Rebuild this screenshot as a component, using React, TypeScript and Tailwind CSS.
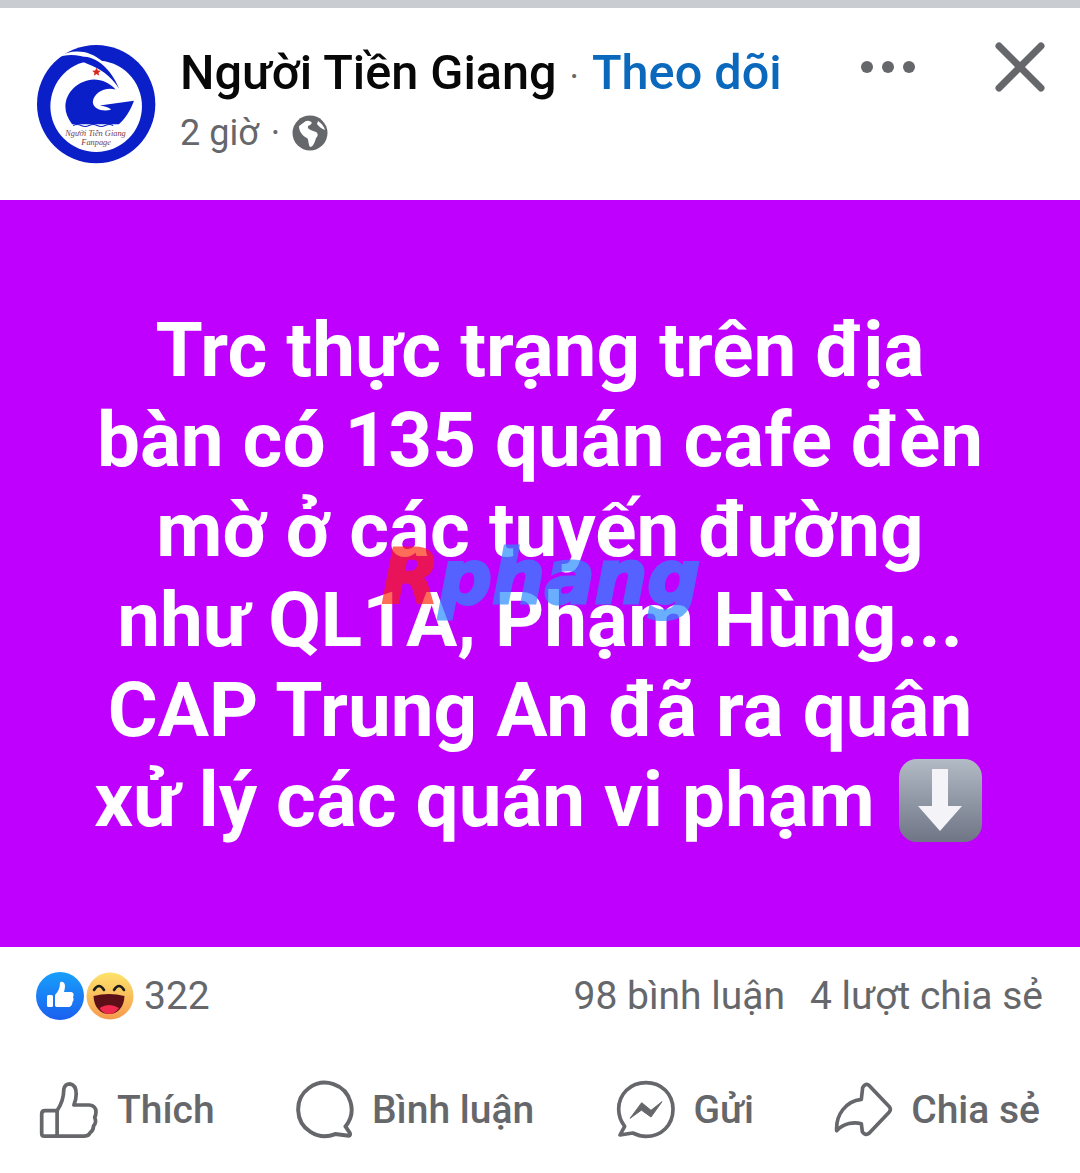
import React from "react";

const G = "#65676b";

function Logo() {
  return (
    <svg width="119" height="119" viewBox="110 135 356 356" className="shrink-0">
      <circle cx="287" cy="312" r="177" fill="#0a1fc8" />
      <circle cx="287" cy="318" r="137" fill="#fff" />
      <path d="M170 172 C240 130 325 165 358 268 C340 225 300 190 240 168 C215 162 190 165 170 172Z" fill="#fff" />
      <path d="M205 178 C265 150 325 190 356 266 C330 225 295 205 262 192 C240 182 222 178 205 178Z" fill="#0a1fc8" />
      <path d="M288 203 l4 8 9 1 -7 6 2 9 -8 -5 -8 5 2 -9 -7 -6 9 -1Z" fill="#d8281c" />
      <path d="M345 268 C310 260 280 280 277 305 C277 328 310 336 332 328 C322 320 310 318 298 316 L400 302 C388 335 372 358 355 372 L215 372 C202 355 195 338 195 320 C195 275 235 240 280 238 C305 238 330 250 345 268Z" fill="#0a1fc8" />
      <path d="M218 376 q12 -6 24 0 t24 0 t24 0 t24 0 t24 0" fill="none" stroke="#0a1fc8" strokeWidth="3" />
      <text x="285" y="408" textAnchor="middle" fontFamily="'Liberation Serif', serif" fontStyle="italic" fontSize="25" fill="#7d3a3a">Người Tiền Giang</text>
      <text x="287" y="434" textAnchor="middle" fontFamily="'Liberation Serif', serif" fontStyle="italic" fontSize="25" fill="#7d3a3a">Fanpage</text>
    </svg>
  );
}

function Globe() {
  return (
    <svg width="36" height="36" viewBox="0 0 36 36" className="shrink-0">
      <circle cx="18" cy="18" r="17.5" fill={G} />
      <path d="M7 11 C11 9 13 5 17 6 C22 7 19 10 16 11 C15 14 19 15 21 16 C26 17 27 20 24 23 C23 27 21 32 18 32 C16 29 17 25 15 23 C11 21 7 17 7 11Z" fill="#fff" />
      <path d="M26 6 C29 8 32 11 33 15 C30 14 27 12 25 9Z" fill="#fff" />
    </svg>
  );
}

function LikeBadge() {
  return (
    <svg width="48" height="48" viewBox="0 0 48 48" className="shrink-0">
      <defs>
        <linearGradient id="lk" x1="0" y1="0" x2="0" y2="1">
          <stop offset="0" stopColor="#18a0fb" />
          <stop offset="1" stopColor="#1b5ff0" />
        </linearGradient>
      </defs>
      <circle cx="24" cy="24" r="24" fill="url(#lk)" />
      <rect x="11" y="23" width="6" height="12" rx="1.5" fill="#fff" />
      <path d="M19 34 V23 C22 20 24 16 24 11 C24 9 29 9 29 14 C29 16 28.500 18 28 20 H35 C38 20 38 24 37 25 C38 27 37.500 29 36.500 30 C36.500 32 35.500 33 35 34 C34 35 33 35 31 35 H22 C21 35 20 35 19 34Z" fill="#fff" />
    </svg>
  );
}

function HahaBadge() {
  return (
    <svg width="48" height="48" viewBox="0 0 48 48" className="shrink-0">
      <defs>
        <linearGradient id="hh" x1="0" y1="0" x2="0" y2="1">
          <stop offset="0" stopColor="#fde36a" />
          <stop offset="1" stopColor="#f59a4d" />
        </linearGradient>
      </defs>
      <circle cx="24" cy="24" r="23.500" fill="url(#hh)" />
      <path d="M8 18 q5 -8 10 0 M28 18 q5 -8 10 0" fill="none" stroke="#1d1d1d" strokeWidth="2.600" strokeLinecap="round" />
      <path d="M7.500 24 Q23 20 38.500 24 C38 36 31 42 23 42 C15 42 8 36 7.500 24Z" fill="#5c0f17" />
      <path d="M13.500 36 Q23 30 33 36 C30 40 27 42 23 42 C19 42 16 40 13.500 36Z" fill="#f0294e" />
    </svg>
  );
}

function ThumbIcon() {
  return (
    <svg width="62" height="60" viewBox="115 385 185 178" className="shrink-0" fill="none" stroke={G} strokeWidth="11" strokeLinejoin="round" strokeLinecap="round">
      <path d="M126 486 Q126 476 136 476 L172 476 L172 552 L134 552 Q126 552 126 544Z" />
      <path d="M172 476 C188 452 192 432 192 412 Q195 396 210 396 Q229 399 229 426 C229 440 226 450 222 459 L268 459 Q288 461 288 480 Q288 490 284 496 Q291 510 281 521 Q280 535 271 541 Q267 552 254 552 L172 552" />
    </svg>
  );
}

function CommentIcon() {
  return (
    <svg width="60" height="60" viewBox="880 385 182 182" className="shrink-0" fill="none" stroke={G} strokeWidth="12" strokeLinejoin="round" strokeLinecap="round">
      <path d="M1036 526 A81 81 0 1 0 1005 549 L1046 554 Q1052 553 1049 545Z" />
    </svg>
  );
}

function MessengerIcon() {
  return (
    <svg width="60" height="60" viewBox="45 57 180 180" className="shrink-0" fill="none" stroke={G} strokeWidth="11" strokeLinejoin="round" strokeLinecap="round">
      <path d="M135 65 C88 65 53 99 53 145 C53 166 61 183 71 196 L57 222 L95 216 C108 222 120 226 135 226 C182 226 216 192 216 145 C216 99 182 65 135 65Z" />
      <path d="M88 171 L122 125 L150 148 L183 122 L150 168 L122 148Z" fill={G} stroke={G} strokeWidth="3" />
    </svg>
  );
}

function ShareIcon() {
  return (
    <svg width="60" height="60" viewBox="697 57 180 180" className="shrink-0" fill="none" stroke={G} strokeWidth="11" strokeLinejoin="round" strokeLinecap="round">
      <path d="M786 80 Q795 64 806 74 L866 137 Q872 145 866 153 L806 216 Q794 226 785 212 L782 188 C760 182 730 186 708 209 C705 162 735 120 782 115Z" />
    </svg>
  );
}

function DownArrow() {
  return (
    <span className="inline-flex w-[83px] h-[83px] rounded-[18px] bg-gradient-to-b from-[#b3bbc6] to-[#6f7585] items-center justify-center align-middle ml-[24px] mr-[4px] mt-[-10px]">
      <svg width="46" height="64" viewBox="0 0 46 64">
        <path d="M15 1 H31 V38 H45 L23 63 L1 38 H15Z" fill="#f3f3f8" />
      </svg>
    </span>
  );
}

export default function App() {
  return (
    <div className="w-[1080px] h-[1173px] bg-white flex flex-col overflow-hidden font-['Roboto',sans-serif]">
      <div className="h-[8px] bg-[#c9ccd1]" />

      <header className="h-[192px] flex items-start pl-[37px] pr-[34px] pt-[37px]">
        <Logo />
        <div className="ml-[24px] flex flex-col">
          <div className="flex items-baseline h-[58px] mt-[-1px]">
            <span className="text-[48.6px] leading-[58px] font-medium text-[#080809]">Người Tiền Giang</span>
            <span className="text-[36px] text-[#65676b] mx-[13px]">·</span>
            <span className="text-[48.6px] leading-[58px] font-medium text-[#0a68bd]">Theo dõi</span>
          </div>
          <div className="flex items-center mt-[9px] text-[36px] leading-[44px] text-[#65676b]">
            <span>2 giờ</span>
            <span className="ml-[12px] mr-[12px]">·</span>
            <Globe />
          </div>
        </div>
        <div className="ml-auto flex items-start">
          <div className="flex gap-[9px] mt-[16px]">
            <span className="w-[12px] h-[12px] rounded-full bg-[#65676b]" />
            <span className="w-[12px] h-[12px] rounded-full bg-[#65676b]" />
            <span className="w-[12px] h-[12px] rounded-full bg-[#65676b]" />
          </div>
          <svg width="52" height="52" viewBox="0 0 52 52" className="ml-[79px] mt-[-4px]" fill="none" stroke={G} strokeWidth="7" strokeLinecap="round">
            <path d="M5 5 L47 47 M47 5 L5 47" />
          </svg>
        </div>
      </header>

      <main className="relative h-[747px] bg-[#bf00ff] flex items-center justify-center">
        <p className="text-center text-white font-bold text-[76.4px] leading-[90px] whitespace-nowrap pt-[2px]">
          Trc thực trạng trên địa
          <br />
          bàn có 135 quán cafe đèn
          <br />
          mờ ở các tuyến đường
          <br />
          như QL1A, Phạm Hùng...
          <br />
          CAP Trung An đã ra quân
          <br />
          xử lý các quán vi phạm
          <DownArrow />
        </p>
        <span className="absolute left-[382px] top-[332px] text-[74px] leading-[90px] font-bold italic whitespace-nowrap font-['DejaVu_Sans',sans-serif]">
          <span className="text-[#ff1e00] opacity-65 [-webkit-text-stroke:3px_#ff1e00]">R</span>
          <span className="text-[#2a8cff] opacity-70 [-webkit-text-stroke:3px_#2a8cff]">phang</span>
        </span>
      </main>

      <section className="h-[96px] flex items-center justify-between pl-[36px] pr-[37px] pt-[2px] text-[39px] text-[#65676b]">
        <div className="flex items-center">
          <LikeBadge />
          <span className="ml-[2px]">
            <HahaBadge />
          </span>
          <span className="ml-[10px]">322</span>
        </div>
        <div className="flex items-center gap-[25px]">
          <span>98 bình luận</span>
          <span>4 lượt chia sẻ</span>
        </div>
      </section>

      <footer className="flex items-center justify-between pl-[38px] pr-[40px] mt-[37px] text-[39px] font-medium text-[#65676b]">
        <div className="flex items-center gap-[17px]">
          <ThumbIcon />
          <span>Thích</span>
        </div>
        <div className="flex items-center gap-[18px] mr-[2px]">
          <CommentIcon />
          <span>Bình luận</span>
        </div>
        <div className="flex items-center gap-[18px]">
          <MessengerIcon />
          <span>Gửi</span>
        </div>
        <div className="flex items-center gap-[18px]">
          <ShareIcon />
          <span>Chia sẻ</span>
        </div>
      </footer>
    </div>
  );
}
